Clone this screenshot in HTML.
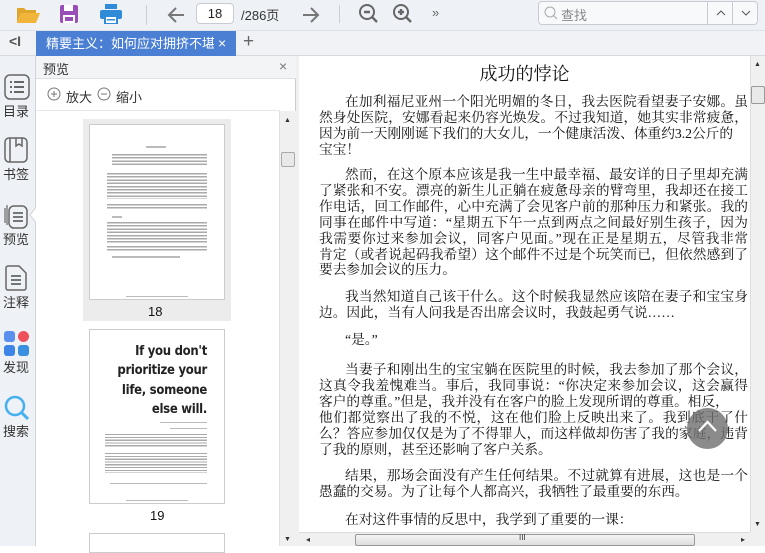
<!DOCTYPE html>
<html><head><meta charset="utf-8"><style>
*{margin:0;padding:0;box-sizing:border-box}
body{width:765px;height:546px;overflow:hidden;position:relative;background:#fff;font-family:"Liberation Sans","Noto Sans CJK SC",sans-serif}
.abs{position:absolute}
.tb{left:0;top:0;width:765px;height:31px;background:#eef2f7;border-bottom:1px solid #dde2e8}
.tabbar{left:0;top:31px;width:765px;height:25px;background:#f0f2f5;border-bottom:1px solid #d6d9de}
.side{left:0;top:56px;width:36px;height:490px;background:#eef1f5;border-right:1px solid #cfd4da}
.slab{position:absolute;left:0;width:32px;text-align:center;font-size:13px;color:#333}
.ln{position:absolute;left:319px;width:429px;height:16px;line-height:16px;font-size:13.7px;font-family:"Liberation Serif","Noto Serif CJK SC",serif;color:#111;white-space:nowrap;text-align:justify;text-align-last:justify;overflow:visible}
.ln.i{left:345px;width:403px}
.ln.s{text-align-last:left}
.tl{position:absolute;height:2px;background:#bbb}
</style></head><body>
<div class="abs tb"></div>
<svg class="abs" style="left:16px;top:5px" width="24" height="20" viewBox="0 0 24 20"><path d="M1 3h7l2 2h10v3H5L1 18z" fill="#e0a52c"/><path d="M5 8h19l-4 10H1z" fill="#f0b53a"/></svg>
<svg class="abs" style="left:59px;top:4px" width="20" height="20" viewBox="0 0 20 20"><rect x="1" y="1" width="18" height="18" rx="2" fill="#9a4fb8"/><rect x="5" y="1" width="9" height="6" fill="#fff"/><rect x="4" y="11" width="12" height="8" fill="#fff"/><rect x="6" y="13" width="8" height="4" fill="#9a4fb8"/></svg>
<svg class="abs" style="left:100px;top:4px" width="22" height="20" viewBox="0 0 22 20"><rect x="5" y="0" width="12" height="5" fill="#2f8ad8"/><rect x="0" y="6" width="22" height="9" rx="2" fill="#2f8ad8"/><rect x="5" y="12" width="12" height="8" fill="#fff" stroke="#2f8ad8" stroke-width="2"/><rect x="7" y="15" width="8" height="1.5" fill="#2f8ad8"/></svg>
<div class="abs" style="left:146px;top:5px;width:1px;height:20px;background:#ccd"></div>
<svg class="abs" style="left:166px;top:5px" width="20" height="20" viewBox="0 0 20 20"><path d="M18 10H3M10 3L3 10l7 7" stroke="#777" stroke-width="2" fill="none"/></svg>
<div class="abs" style="left:196px;top:3px;width:38px;height:21px;border:1px solid #c8ccd2;border-radius:4px;background:#fff;font-size:13px;text-align:center;line-height:19px;color:#222">18</div>
<div class="abs" style="left:241px;top:5px;font-size:13px;color:#333">/286页</div>
<svg class="abs" style="left:301px;top:5px" width="20" height="20" viewBox="0 0 20 20"><path d="M2 10h15M10 3l7 7-7 7" stroke="#777" stroke-width="2" fill="none"/></svg>
<div class="abs" style="left:339px;top:5px;width:1px;height:18px;background:#ccd"></div>
<svg class="abs" style="left:358px;top:3px" width="22" height="22" viewBox="0 0 22 22"><circle cx="9" cy="9" r="7" stroke="#666" stroke-width="2" fill="none"/><path d="M6 9h6M14 14l5 5" stroke="#666" stroke-width="2.4"/></svg>
<svg class="abs" style="left:392px;top:3px" width="22" height="22" viewBox="0 0 22 22"><circle cx="9" cy="9" r="7" stroke="#666" stroke-width="2" fill="none"/><path d="M6 9h6M9 6v6M14 14l5 5" stroke="#666" stroke-width="2.4"/></svg>
<div class="abs" style="left:432px;top:5px;font-size:13px;color:#666">»</div>
<div class="abs" style="left:538px;top:1px;width:220px;height:24px;border:1px solid #c8ccd2;border-radius:4px;background:#f8f9fb"></div>
<svg class="abs" style="left:544px;top:6px" width="14" height="14" viewBox="0 0 14 14"><circle cx="6" cy="6" r="5" stroke="#aaa" fill="none"/><path d="M9.5 9.5l3.5 3.5" stroke="#aaa"/></svg>
<div class="abs" style="left:561px;top:5px;font-size:13px;color:#888">查找</div>
<div class="abs" style="left:707px;top:1px;width:1px;height:24px;background:#c8ccd2"></div>
<div class="abs" style="left:732px;top:1px;width:1px;height:24px;background:#c8ccd2"></div>
<svg class="abs" style="left:716px;top:9px" width="10" height="8"><path d="M1 6l4-4 4 4" stroke="#555" fill="none"/></svg>
<svg class="abs" style="left:741px;top:9px" width="10" height="8"><path d="M1 2l4 4 4-4" stroke="#555" fill="none"/></svg>

<div class="abs tabbar"></div>
<div class="abs" style="left:9px;top:33px;font-size:14px;color:#555;font-weight:bold">&lt;I</div>
<div class="abs" style="left:36px;top:31px;width:200px;height:25px;background:#4a7fd4"></div>
<div class="abs" style="left:46px;top:31px;width:168px;height:25px;color:#fff;font-size:13px;line-height:25px;white-space:nowrap;overflow:hidden">精要主义：如何应对拥挤不堪的工作</div>
<div class="abs" style="left:218px;top:35px;font-size:14px;color:#fff">×</div>
<div class="abs" style="left:243px;top:31px;font-size:19px;color:#666">+</div>

<div class="abs side"></div>
<svg class="abs" style="left:4px;top:74px" width="26" height="26" viewBox="0 0 26 26"><rect x="1" y="1" width="24" height="24" rx="5" fill="none" stroke="#666" stroke-width="1.5"/><path d="M6 8h2M6 13h2M6 18h2M10 8h10M10 13h10M10 18h10" stroke="#666" stroke-width="2"/></svg>
<div class="slab" style="top:101px">目录</div>
<svg class="abs" style="left:4px;top:137px" width="24" height="26" viewBox="0 0 24 26"><rect x="1" y="1" width="22" height="24" rx="4" fill="none" stroke="#666" stroke-width="1.5"/><path d="M6 1v24M12 1v8l3-2 3 2V1" stroke="#666" stroke-width="1.5" fill="none"/></svg>
<div class="slab" style="top:164px">书签</div>
<svg class="abs" style="left:4px;top:201px" width="24" height="28" viewBox="0 0 24 28"><path d="M3 4v20M1 7v15" stroke="#666" stroke-width="1.2"/><rect x="5" y="5" width="18" height="22" rx="5" fill="none" stroke="#666" stroke-width="1.5"/><path d="M9 12h10M9 16h10M9 20h10" stroke="#666" stroke-width="1.8"/></svg>
<div class="slab" style="top:229px">预览</div>
<svg class="abs" style="left:29px;top:206px" width="8" height="18"><path d="M8 0L1 9l7 9z" fill="#fff" stroke="#cfd4da"/></svg>
<svg class="abs" style="left:5px;top:265px" width="22" height="26" viewBox="0 0 22 26"><path d="M3 1h11l7 7v15a2 2 0 0 1-2 2H3a2 2 0 0 1-2-2V3a2 2 0 0 1 2-2z" fill="none" stroke="#666" stroke-width="1.5"/><path d="M6 11h10M6 15h10M6 19h10" stroke="#666" stroke-width="1.8"/></svg>
<div class="slab" style="top:292px">注释</div>
<svg class="abs" style="left:4px;top:331px" width="26" height="26" viewBox="0 0 26 26"><rect x="0" y="0" width="11" height="11" rx="3" fill="#5b8ff0"/><circle cx="19.5" cy="5.5" r="5.5" fill="#f0505a"/><rect x="0" y="14" width="11" height="11" rx="3" fill="#3d86e8"/><rect x="14" y="14" width="11" height="11" rx="3" fill="#3a90e0"/></svg>
<div class="slab" style="top:357px">发现</div>
<svg class="abs" style="left:4px;top:395px" width="26" height="26" viewBox="0 0 26 26"><circle cx="11" cy="11" r="9" fill="none" stroke="#45b0f0" stroke-width="2.5"/><path d="M18 18l6 6" stroke="#45b0f0" stroke-width="3"/></svg>
<div class="slab" style="top:421px">搜索</div>

<div class="abs" style="left:36px;top:56px;width:260px;height:490px;background:#fff;border-right:1px solid #ccc"></div>
<div class="abs" style="left:36px;top:56px;width:260px;height:23px;background:#f3f4f6;border-bottom:1px solid #dde0e4"></div>
<div class="abs" style="left:43px;top:59px;font-size:13px;color:#333">预览</div>
<div class="abs" style="left:279px;top:58px;font-size:14px;color:#777">×</div>
<svg class="abs" style="left:47px;top:87px" width="14" height="14" viewBox="0 0 14 14"><circle cx="7" cy="7" r="6" fill="none" stroke="#777"/><path d="M4 7h6M7 4v6" stroke="#777"/></svg>
<div class="abs" style="left:66px;top:87px;font-size:13px;color:#333">放大</div>
<svg class="abs" style="left:97px;top:87px" width="14" height="14" viewBox="0 0 14 14"><circle cx="7" cy="7" r="6" fill="none" stroke="#777"/><path d="M4 7h6" stroke="#777"/></svg>
<div class="abs" style="left:116px;top:87px;font-size:13px;color:#333">缩小</div>
<div class="abs" style="left:36px;top:110px;width:244px;height:1px;background:#e5e7ea"></div>
<div class="abs" style="left:279px;top:111px;width:17px;height:435px;background:#f0f0f0;border-left:1px solid #e0e0e0"></div>
<div class="abs" style="left:281px;top:152px;width:14px;height:15px;background:#e8e8e8;border:1px solid #aaa;border-radius:2px"></div>
<div class="abs" style="left:284px;top:117px;font-size:7px;color:#333">▲</div>
<div class="abs" style="left:284px;top:536px;font-size:7px;color:#333">▼</div>

<div class="abs" style="left:83px;top:119px;width:148px;height:202px;background:#ececec"></div>
<div class="abs" style="left:89px;top:124px;width:136px;height:176px;background:#fff;border:1px solid #ccc"></div>
<div class="tl" style="left:146px;top:146px;width:20px"></div>
<div class="tl" style="left:112px;top:154px;width:95px;height:12px;background:repeating-linear-gradient(#aaa 0 1.5px,#fff 1.5px 3.2px)"></div>
<div class="tl" style="left:107px;top:173px;width:100px;height:26px;background:repeating-linear-gradient(#aaa 0 1.5px,#fff 1.5px 3.2px)"></div>
<div class="tl" style="left:107px;top:204px;width:100px;height:6px;background:repeating-linear-gradient(#aaa 0 1.5px,#fff 1.5px 3.2px)"></div>
<div class="tl" style="left:112px;top:216px;width:10px"></div>
<div class="tl" style="left:107px;top:222px;width:100px;height:22px;background:repeating-linear-gradient(#aaa 0 1.5px,#fff 1.5px 3.2px)"></div>
<div class="tl" style="left:107px;top:246px;width:100px;height:6px;background:repeating-linear-gradient(#aaa 0 1.5px,#fff 1.5px 3.2px)"></div>
<div class="tl" style="left:112px;top:256px;width:68px"></div>
<div class="tl" style="left:126px;top:296px;width:62px;height:1px"></div>
<div class="abs" style="left:148px;top:304px;font-size:13px;color:#111">18</div>

<div class="abs" style="left:89px;top:329px;width:136px;height:175px;background:#fff;border:1px solid #ccc"></div>
<div class="abs" style="left:100px;top:342px;width:107px;text-align:right;font-size:13px;line-height:19.3px;font-weight:bold;color:#222;font-family:'DejaVu Sans Condensed','Liberation Sans Narrow',sans-serif;letter-spacing:-0.3px">If you don't<br>prioritize your<br>life, someone<br>else will.</div>
<div class="tl" style="left:160px;top:422px;width:47px;height:1px"></div>
<div class="tl" style="left:170px;top:428px;width:37px;height:1px"></div>
<div class="tl" style="left:105px;top:434px;width:102px;height:14px;background:repeating-linear-gradient(#aaa 0 1.2px,#fff 1.2px 2.8px)"></div>
<div class="tl" style="left:105px;top:453px;width:102px;height:20px;background:repeating-linear-gradient(#aaa 0 1.2px,#fff 1.2px 2.8px)"></div>
<div class="tl" style="left:110px;top:483px;width:97px;height:1px"></div>
<div class="tl" style="left:126px;top:500px;width:62px;height:1px"></div>
<div class="abs" style="left:150px;top:508px;font-size:13px;color:#111">19</div>
<div class="abs" style="left:89px;top:533px;width:136px;height:20px;background:#fff;border:1px solid #ccc"></div>

<div class="abs" style="left:296px;top:56px;width:469px;height:490px;background:#f0f0f0"></div>
<div class="abs" style="left:299px;top:56px;width:451px;height:476px;background:#fff"></div>

<div class="abs" style="left:299px;top:60px;width:451px;text-align:center;font-size:18px;font-family:'Liberation Serif','Noto Serif CJK SC',serif;color:#111">成功的悖论</div>

<div class="ln i" style="top:94px">在加利福尼亚州一个阳光明媚的冬日，我去医院看望妻子安娜。虽</div>
<div class="ln" style="top:110px">然身处医院，安娜看起来仍容光焕发。不过我知道，她其实非常疲惫，</div>
<div class="ln s" style="top:126px">因为前一天刚刚诞下我们的大女儿，一个健康活泼、体重约3.2公斤的</div>
<div class="ln s" style="top:142px">宝宝！</div>

<div class="ln i" style="top:167px">然而，在这个原本应该是我一生中最幸福、最安详的日子里却充满</div>
<div class="ln" style="top:183px">了紧张和不安。漂亮的新生儿正躺在疲惫母亲的臂弯里，我却还在接工</div>
<div class="ln" style="top:199px">作电话，回工作邮件，心中充满了会见客户前的那种压力和紧张。我的</div>
<div class="ln" style="top:215px">同事在邮件中写道：“星期五下午一点到两点之间最好别生孩子，因为</div>
<div class="ln" style="top:231px">我需要你过来参加会议，同客户见面。”现在正是星期五，尽管我非常</div>
<div class="ln" style="top:247px">肯定（或者说起码我希望）这个邮件不过是个玩笑而已，但依然感到了</div>
<div class="ln s" style="top:262px">要去参加会议的压力。</div>

<div class="ln i" style="top:289px">我当然知道自己该干什么。这个时候我显然应该陪在妻子和宝宝身</div>
<div class="ln s" style="top:305px">边。因此，当有人问我是否出席会议时，我鼓起勇气说……</div>

<div class="ln i s" style="top:332px">“是。”</div>

<div class="ln i" style="top:362px">当妻子和刚出生的宝宝躺在医院里的时候，我去参加了那个会议，</div>
<div class="ln" style="top:378px">这真令我羞愧难当。事后，我同事说：“你决定来参加会议，这会赢得</div>
<div class="ln s" style="top:394px">客户的尊重。”但是，我并没有在客户的脸上发现所谓的尊重。相反，</div>
<div class="ln" style="top:410px">他们都觉察出了我的不悦，这在他们脸上反映出来了。我到底干了什</div>
<div class="ln" style="top:426px">么？答应参加仅仅是为了不得罪人，而这样做却伤害了我的家庭，违背</div>
<div class="ln s" style="top:442px">了我的原则，甚至还影响了客户关系。</div>

<div class="ln i" style="top:468px">结果，那场会面没有产生任何结果。不过就算有进展，这也是一个</div>
<div class="ln s" style="top:484px">愚蠢的交易。为了让每个人都高兴，我牺牲了最重要的东西。</div>

<div class="ln i s" style="top:512px">在对这件事情的反思中，我学到了重要的一课：</div>

<div class="abs" style="left:750px;top:56px;width:15px;height:476px;background:#f0f0f0;border-left:1px solid #ddd"></div>
<div class="abs" style="left:751px;top:86px;width:14px;height:18px;background:#e9e9e9;border:1px solid #999;border-radius:2px"></div>
<div class="abs" style="left:754px;top:61px;font-size:7px;color:#333">▲</div>
<div class="abs" style="left:754px;top:521px;font-size:7px;color:#333">▼</div>
<div class="abs" style="left:299px;top:532px;width:451px;height:14px;background:#f0f0f0;border-top:1px solid #ddd"></div>
<div class="abs" style="left:355px;top:534px;width:340px;height:12px;background:linear-gradient(#f4f4f4,#ddd);border:1px solid #999;border-radius:2px"></div>
<div class="abs" style="left:519px;top:533px;font-size:8px;color:#333">III</div>
<div class="abs" style="left:306px;top:535px;font-size:8px;color:#333">◂</div>
<div class="abs" style="left:741px;top:535px;font-size:8px;color:#333">▸</div>

<div class="abs" style="left:687px;top:408px;width:41px;height:41px;border-radius:50%;background:rgba(110,110,110,0.8)"></div>
<svg class="abs" style="left:697px;top:418px" width="21" height="16" viewBox="0 0 21 16"><path d="M2 13L10.5 4 19 13" stroke="#fff" stroke-width="2.2" fill="none"/></svg>
</body></html>
